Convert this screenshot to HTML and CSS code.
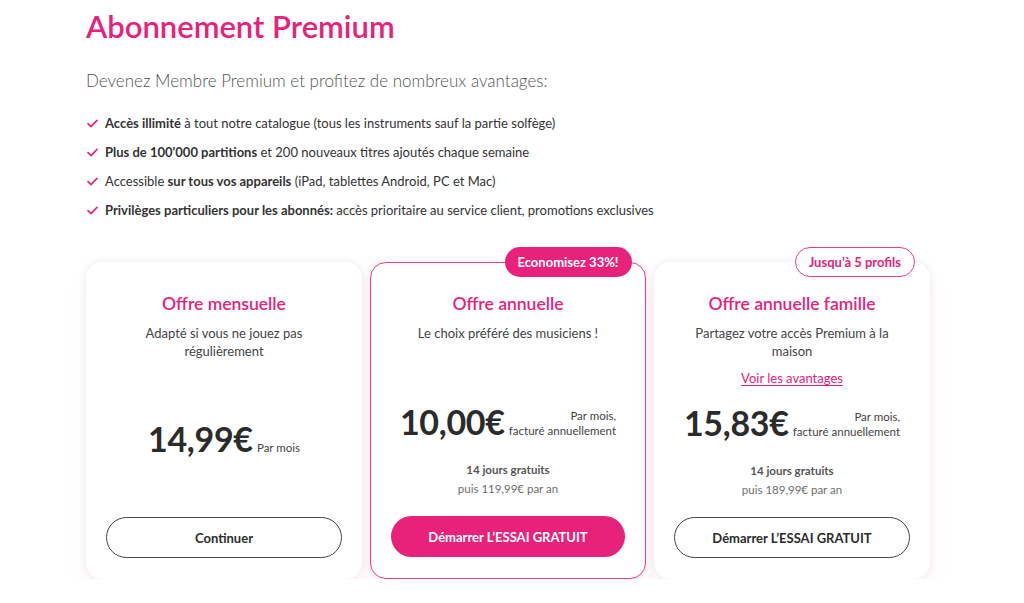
FILE: index.html
```html
<!DOCTYPE html>
<html lang="fr">
<head>
<meta charset="utf-8">
<title>Abonnement Premium</title>
<link rel="stylesheet" href="styles.css">
</head>
<body>
<main class="page">
  <h1 class="title">Abonnement Premium</h1>
  <p class="subtitle">Devenez Membre Premium et profitez de nombreux avantages:</p>
  <ul class="benefits">
    <li><svg class="check" viewBox="0 0 12 10"><path d="M1 5.2 4.3 8.4 11 1.6"/></svg><span><b>Accès illimité</b> à tout notre catalogue (tous les instruments sauf la partie solfège)</span></li>
    <li><svg class="check" viewBox="0 0 12 10"><path d="M1 5.2 4.3 8.4 11 1.6"/></svg><span><b>Plus de 100'000 partitions</b> et 200 nouveaux titres ajoutés chaque semaine</span></li>
    <li><svg class="check" viewBox="0 0 12 10"><path d="M1 5.2 4.3 8.4 11 1.6"/></svg><span>Accessible <b>sur tous vos appareils</b> (iPad, tablettes Android, PC et Mac)</span></li>
    <li><svg class="check" viewBox="0 0 12 10"><path d="M1 5.2 4.3 8.4 11 1.6"/></svg><span><b>Privilèges particuliers pour les abonnés:</b> accès prioritaire au service client, promotions exclusives</span></li>
  </ul>

  <section class="plans">
    <article class="card">
      <h2 class="card-title">Offre mensuelle</h2>
      <p class="card-desc">Adapté si vous ne jouez pas régulièrement</p>
      <div class="pricing pricing--single">
        <div class="price"><span class="amount">14,99€</span> <span class="per">Par mois</span></div>
      </div>
      <button class="btn btn--outline">Continuer</button>
    </article>

    <article class="card card--featured">
      <span class="badge badge--filled">Economisez 33%!</span>
      <h2 class="card-title">Offre annuelle</h2>
      <p class="card-desc">Le choix préféré des musiciens !</p>
      <div class="pricing">
        <div class="price"><span class="amount">10,00€</span> <span class="per">Par mois,<br>facturé annuellement</span></div>
        <div class="trial">
          <span class="trial-days">14 jours gratuits</span>
          <span class="trial-then">puis 119,99€ par an</span>
        </div>
      </div>
      <button class="btn btn--primary">Démarrer L’ESSAI GRATUIT</button>
    </article>

    <article class="card">
      <span class="badge badge--outline">Jusqu’à 5 profils</span>
      <h2 class="card-title">Offre annuelle famille</h2>
      <p class="card-desc">Partagez votre accès Premium à la maison</p>
      <a class="card-link" href="#">Voir les avantages</a>
      <div class="pricing">
        <div class="price"><span class="amount">15,83€</span> <span class="per">Par mois,<br>facturé annuellement</span></div>
        <div class="trial">
          <span class="trial-days">14 jours gratuits</span>
          <span class="trial-then">puis 189,99€ par an</span>
        </div>
      </div>
      <button class="btn btn--outline">Démarrer L’ESSAI GRATUIT</button>
    </article>
  </section>
</main>
</body>
</html>
```

FILE: styles.css
```css
* { box-sizing: border-box; }

html, body {
  margin: 0;
  background: #ffffff;
}

body {
  font-family: Lato, "Open Sans", "Liberation Sans", sans-serif;
  color: #333333;
}

.page {
  padding: 8px 95px 0 86px;
}

.title {
  margin: 0;
  font-size: 31px;
  line-height: 36px;
  font-weight: 600;
  color: #e8217a;
}

.subtitle {
  margin: 26px 0 0;
  font-size: 17px;
  line-height: 22px;
  font-weight: 300;
  color: #555555;
}

.benefits {
  list-style: none;
  margin: 22px 0 0;
  padding: 0;
  display: flex;
  flex-direction: column;
  gap: 11px;
}

.benefits li {
  display: flex;
  align-items: center;
  gap: 7px;
  font-size: 13px;
  line-height: 18px;
  color: #333333;
}

.benefits b { font-weight: 700; }

.check {
  width: 11px;
  height: 9px;
  margin-left: 1px;
  flex: none;
  fill: none;
  stroke: #e8217a;
  stroke-width: 1.8;
  stroke-linecap: round;
  stroke-linejoin: round;
}

.plans {
  margin-top: 43px;
  display: grid;
  grid-template-columns: repeat(3, 276px);
  gap: 8px;
}

.card {
  position: relative;
  height: 317px;
  background: #ffffff;
  border-radius: 16px;
  padding: 31px 20px 21px;
  display: flex;
  flex-direction: column;
  align-items: center;
  text-align: center;
  box-shadow: 0 0 7px rgba(0, 0, 0, 0.08), 0 10px 24px rgba(232, 33, 122, 0.05);
}

.card--featured {
  border: 1.5px solid #ec3d8a;
  padding-top: 29.5px;
}

.badge {
  position: absolute;
  top: -15px;
  right: 15px;
  height: 30px;
  padding: 0 13px;
  border-radius: 15px;
  display: flex;
  align-items: center;
  font-size: 13px;
  font-weight: 700;
}

.badge--filled {
  background: #e8217a;
  color: #ffffff;
  right: 13.5px;
  top: -16.5px;
}

.badge--outline {
  background: #ffffff;
  color: #e8217a;
  border: 1.5px solid #ec3d8a;
}

.card-title {
  margin: 0;
  font-size: 17.5px;
  line-height: 22px;
  font-weight: 600;
  color: #e8217a;
}

.card-desc {
  margin: 10px 0 0;
  max-width: 200px;
  font-size: 13px;
  line-height: 17.5px;
  color: #444444;
}

.card-link {
  margin-top: 10px;
  font-size: 13px;
  line-height: 17px;
  color: #e8217a;
  text-decoration: underline;
  text-underline-offset: 2px;
}

.pricing {
  flex: 1;
  display: flex;
  flex-direction: column;
  justify-content: flex-end;
  align-items: center;
  padding-bottom: 18px;
}

.pricing--single {
  padding-bottom: 59px;
}

.price {
  color: #2b2b2b;
  white-space: nowrap;
}

.amount {
  font-size: 34px;
  line-height: 38px;
  font-weight: 700;
  letter-spacing: -0.3px;
}

.per {
  display: inline-block;
  font-size: 11.5px;
  line-height: 15px;
  text-align: right;
  color: #444444;
}

.trial {
  margin-top: 19px;
  display: flex;
  flex-direction: column;
  font-size: 11.5px;
  line-height: 19px;
}

.trial-days {
  font-weight: 700;
  color: #555555;
}

.trial-then {
  color: #6d6d6d;
}

.btn {
  width: 100%;
  height: 41px;
  flex: none;
  border-radius: 21px;
  font-family: inherit;
  font-size: 13px;
  font-weight: 700;
  cursor: pointer;
}

.btn--outline {
  background: #ffffff;
  border: 1.5px solid #444444;
  color: #2b2b2b;
}

.btn--primary {
  background: #e8217a;
  border: none;
  color: #ffffff;
}
```
